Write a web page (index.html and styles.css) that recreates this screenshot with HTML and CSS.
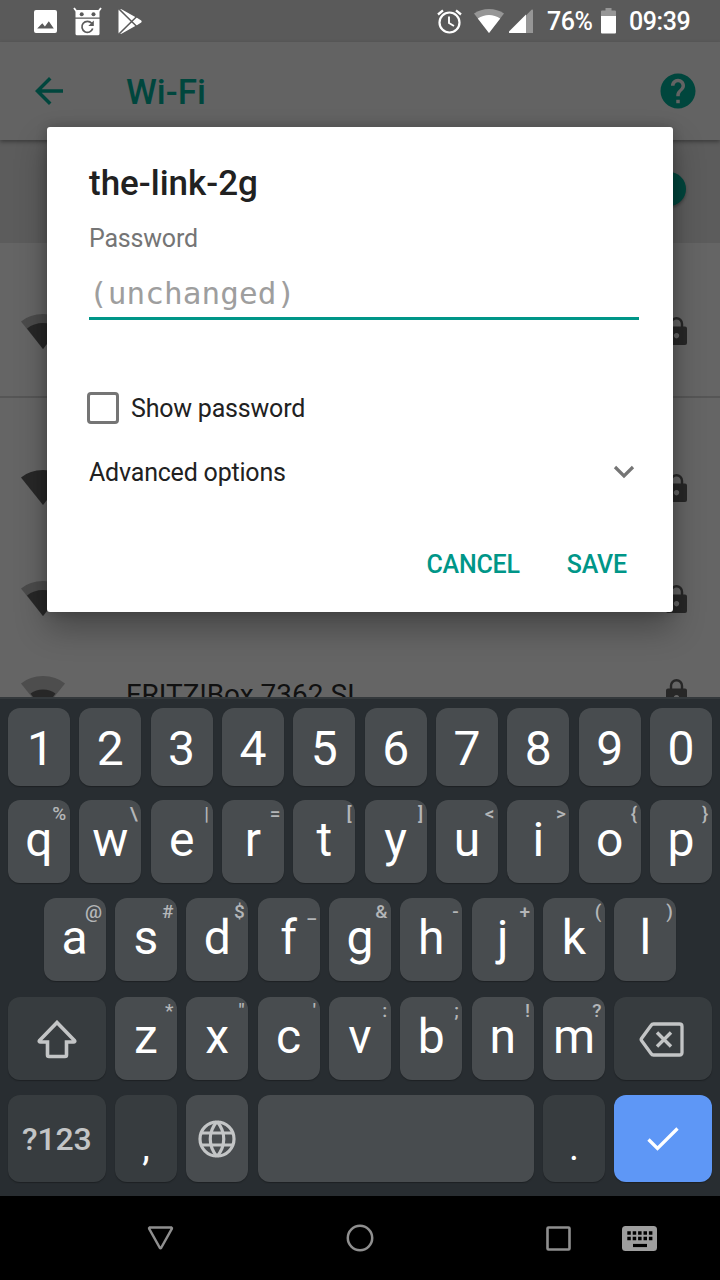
FILE: index.html
```html
<!DOCTYPE html>
<html lang="en">
<head>
<meta charset="utf-8">
<title>Wi-Fi</title>
<link rel="stylesheet" href="styles.css">
</head>
<body>
<div class="screen">
  <main class="app">
    <header class="status">
      <div class="status-left">
        <svg width="23" height="23" viewBox="0 0 23 23"><path fill="#fff" fill-rule="evenodd" d="M2 0h19A2 2 0 0 1 23 2v19a2 2 0 0 1-2 2H2A2 2 0 0 1 0 21V2A2 2 0 0 1 2 0zM3.200 18.500h16.600l-5-7.300-3.900 5.300-2.600-3.200z"/></svg>
        <svg class="bot" width="29" height="29" viewBox="0 0 29 29"><path d="M1 1l3 4M28 1l-3 4" stroke="#fff" stroke-width="1.800" fill="none"/><path fill="#fff" d="M4.500 3h20a2 2 0 0 1 2 2v5.500h-24V5a2 2 0 0 1 2-2zM2.500 11.700h24v15a1.500 1.500 0 0 1-1.500 1.500h-21a1.500 1.500 0 0 1-1.500-1.500z"/><circle cx="8.700" cy="7.200" r="2" fill="#5a5a5a"/><circle cx="20.500" cy="7.200" r="2" fill="#5a5a5a"/><path d="M18.700 16.300a5.500 5.500 0 1 0 1 5.200" stroke="#5a5a5a" stroke-width="1.700" fill="none"/><path d="M20.800 13.500v5.500h-5.500z" fill="#5a5a5a"/></svg>
        <svg class="play" width="24" height="25" viewBox="0 0 24 25"><path fill="#fff" d="M.5 1.500Q.5 .3 2 .3h1.500L17.300 8l1.300 .6 4.600 3q.9.900 0 1.800l-4.600 3-1.300.6L3.500 24.700H2Q.5 24.700 .5 23.500z"/><path d="M1.200 .2L19 17.800M1.200 24.800L19 7.200" stroke="#5a5a5a" stroke-width="1.500"/></svg>
      </div>
      <div class="status-right">
        <svg width="25" height="25" viewBox="0 0 25 25" fill="none" stroke="#fff"><circle cx="12.500" cy="13.500" r="10" stroke-width="2.200"/><path d="M1 5.500L6 1.300M24 5.500L19 1.300" stroke-width="2.300"/><path d="M12 7.500v6.500l5 3" stroke-width="1.900"/></svg>
        <svg class="s-wifi" width="30" height="24" viewBox="0 0 30 24"><path fill="#969696" d="M15 24L0 4.500Q6.500 0 15 0t15 4.500z"/><path fill="#fff" d="M15 24L3.800 9.500Q9 6 15 6t11.200 3.500z"/></svg>
        <svg class="s-cell" width="24" height="24" viewBox="0 0 24 24"><path fill="#969696" d="M0 24L22.500 .7Q24 0 24 1.500V24z"/><path fill="#fff" d="M0 22.500L17 5.500V24H1Q-.5 24 0 22.500z"/></svg>
        <span class="pct">76%</span>
        <svg class="s-batt" width="15" height="26" viewBox="0 0 15 26"><path fill="#969696" d="M0 8V3.500Q0 2.500 1 2.500h3.500V0h6v2.500H14q1 0 1 1V8z"/><path fill="#fff" d="M0 8h15v16.500q0 1-1 1H1q-1 0-1-1z"/></svg>
        <span class="time">09:39</span>
      </div>
    </header>

    <div class="appbar">
      <svg width="42" height="42" viewBox="0 0 24 24"><path fill="#00463d" d="M20 11H7.830l5.590-5.590L12 4l-8 8 8 8 1.410-1.410L7.830 13H20v-2z"/></svg>
      <h1 class="title">Wi-Fi</h1>
      <svg class="help" width="42" height="42" viewBox="0 0 24 24"><path fill="#00463d" d="M12 2C6.480 2 2 6.480 2 12s4.480 10 10 10 10-4.480 10-10S17.520 2 12 2zm1 17h-2v-2h2v2zm2.070-7.750l-.9.920C13.450 12.900 13 13.500 13 15h-2v-.5c0-1.100.45-2.100 1.170-2.830l1.240-1.260c.37-.36.590-.86.590-1.410 0-1.100-.9-2-2-2s-2 .9-2 2H8c0-2.210 1.790-4 4-4s4 1.790 4 4c0 .88-.36 1.680-.93 2.250z"/></svg>
    </div>

    <div class="switchbar"><span class="thumb"></span></div>

    <div class="net net-first">
      <svg width="44" height="35" viewBox="0 0 44 35"><path fill="#4b4b4b" d="M22 35L0 7.500Q9 0 22 0t22 7.500z"/><path fill="#272727" d="M22 35L6 14.500Q13 9 22 9t16 5.500z"/></svg>
      <svg class="lock" width="21" height="28" viewBox="0 0 21 28"><path d="M5 11V6.800a5.500 5.500 0 0 1 11 0V11" fill="none" stroke="#272727" stroke-width="2.400"/><path fill="#272727" fill-rule="evenodd" d="M2 9.500h17a2 2 0 0 1 2 2V26a2 2 0 0 1-2 2H2a2 2 0 0 1-2-2V11.500a2 2 0 0 1 2-2zM10.500 16a2.700 2.700 0 1 0 .01 0z"/></svg>
    </div>
    <div class="net net-second">
      <svg width="44" height="35" viewBox="0 0 44 35"><path fill="#272727" d="M22 35L0 7.500Q9 0 22 0t22 7.500z"/></svg>
      <svg class="lock" width="21" height="28" viewBox="0 0 21 28"><path d="M5 11V6.800a5.500 5.500 0 0 1 11 0V11" fill="none" stroke="#272727" stroke-width="2.400"/><path fill="#272727" fill-rule="evenodd" d="M2 9.500h17a2 2 0 0 1 2 2V26a2 2 0 0 1-2 2H2a2 2 0 0 1-2-2V11.500a2 2 0 0 1 2-2zM10.500 16a2.700 2.700 0 1 0 .01 0z"/></svg>
    </div>
    <div class="net net-third">
      <svg width="44" height="35" viewBox="0 0 44 35"><path fill="#4b4b4b" d="M22 35L0 7.500Q9 0 22 0t22 7.500z"/><path fill="#272727" d="M22 35L6 14.500Q13 9 22 9t16 5.500z"/></svg>
      <svg class="lock" width="21" height="28" viewBox="0 0 21 28"><path d="M5 11V6.800a5.500 5.500 0 0 1 11 0V11" fill="none" stroke="#272727" stroke-width="2.400"/><path fill="#272727" fill-rule="evenodd" d="M2 9.500h17a2 2 0 0 1 2 2V26a2 2 0 0 1-2 2H2a2 2 0 0 1-2-2V11.500a2 2 0 0 1 2-2zM10.500 16a2.700 2.700 0 1 0 .01 0z"/></svg>
    </div>
    <div class="net net-last">
      <svg width="44" height="35" viewBox="0 0 44 35"><path fill="#4d4d4d" d="M22 35L0 7.500Q9 0 22 0t22 7.500z"/><path fill="#272727" d="M22 35L9.500 17.500Q15 13.500 22 13.500t12.500 4z"/></svg>
      <span class="ssid">FRITZ!Box 7362 SL</span>
      <svg class="lock" width="21" height="28" viewBox="0 0 21 28"><path d="M5 11V6.800a5.500 5.500 0 0 1 11 0V11" fill="none" stroke="#272727" stroke-width="2.400"/><path fill="#272727" fill-rule="evenodd" d="M2 9.500h17a2 2 0 0 1 2 2V26a2 2 0 0 1-2 2H2a2 2 0 0 1-2-2V11.500a2 2 0 0 1 2-2zM10.500 16a2.700 2.700 0 1 0 .01 0z"/></svg>
    </div>

    <section class="dialog">
      <h2 class="dialog-title">the-link-2g</h2>
      <div class="label">Password</div>
      <div class="field">(unchanged)</div>
      <div class="check-row"><span class="box"></span><span class="check-text">Show password</span></div>
      <div class="advanced">
        <span class="adv-text">Advanced options</span>
        <svg width="22" height="14" viewBox="0 0 22 14"><path d="M2 2l9 9 9-9" fill="none" stroke="#757575" stroke-width="3.200"/></svg>
      </div>
      <div class="actions"><span class="cancel">CANCEL</span><span class="save">SAVE</span></div>
    </section>
  </main>

  <section class="keyboard">
    <div class="row digits">
      <div class="key one">1</div><div class="key">2</div><div class="key">3</div><div class="key">4</div><div class="key">5</div><div class="key">6</div><div class="key">7</div><div class="key">8</div><div class="key">9</div><div class="key">0</div>
    </div>
    <div class="row">
      <div class="key">q<span class="hint">%</span></div><div class="key">w<span class="hint">\</span></div><div class="key">e<span class="hint">|</span></div><div class="key">r<span class="hint">=</span></div><div class="key">t<span class="hint">[</span></div><div class="key">y<span class="hint">]</span></div><div class="key">u<span class="hint">&lt;</span></div><div class="key">i<span class="hint">&gt;</span></div><div class="key">o<span class="hint">{</span></div><div class="key">p<span class="hint">}</span></div>
    </div>
    <div class="row home">
      <div class="key">a<span class="hint">@</span></div><div class="key">s<span class="hint">#</span></div><div class="key">d<span class="hint">$</span></div><div class="key">f<span class="hint">_</span></div><div class="key">g<span class="hint">&amp;</span></div><div class="key">h<span class="hint">-</span></div><div class="key">j<span class="hint">+</span></div><div class="key">k<span class="hint">(</span></div><div class="key">l<span class="hint">)</span></div>
    </div>
    <div class="row">
      <div class="key wide dark icon"><svg width="40" height="39" viewBox="0 0 40 39"><path d="M20 2.500L2.500 20.500q-.8 1.500 1 1.500H10.500V35q0 1.500 1.500 1.500H28q1.500 0 1.500-1.500V22H36.500q1.800 0 1-1.500z" fill="none" stroke="#c3c5c6" stroke-width="3.600"/></svg></div>
      <div class="key">z<span class="hint">*</span></div><div class="key">x<span class="hint">"</span></div><div class="key">c<span class="hint">'</span></div><div class="key">v<span class="hint">:</span></div><div class="key">b<span class="hint">;</span></div><div class="key">n<span class="hint">!</span></div><div class="key">m<span class="hint">?</span></div>
      <div class="key wide dark icon"><svg class="del" width="45" height="35" viewBox="0 0 45 35" fill="none" stroke="#c3c5c6"><path d="M14.500 2H40.500q2.500 0 2.500 2.500V30.500q0 2.500-2.500 2.500H14.500q-1.500 0-2.500-1.500L2.500 18.500q-.7-1 0-2L12 3.500q1-1.500 2.500-1.500z" stroke-width="3.300"/><path d="M18 10.500L32 24.500M32 10.500L18 24.500" stroke-width="3.400"/></svg></div>
    </div>
    <div class="row bottom">
      <div class="key wide dark symbols">?123</div>
      <div class="key dark punct">,</div>
      <div class="key icon"><svg width="38" height="38" viewBox="0 0 38 38" fill="none" stroke="#c3c5c6" stroke-width="3.200"><circle cx="19" cy="19" r="17"/><path d="M3.500 13h31M3.500 25h31"/><path d="M19 1.500c-9 10.500-9 24.500 0 35M19 1.500c9 10.500 9 24.500 0 35"/></svg></div>
      <div class="key space"></div>
      <div class="key dark punct">.</div>
      <div class="key wide enter icon"><svg width="32" height="24" viewBox="0 0 32 24"><path d="M1.500 12.500L10.500 21.500 30.500 1.500" fill="none" stroke="#fff" stroke-width="3.300"/></svg></div>
    </div>
  </section>

  <nav class="nav">
    <svg width="27" height="24" viewBox="0 0 27 24"><path d="M2.500 1.500h22q.8.400.4 1.200L14.300 21.700q-.8 1-1.600 0L2.100 2.700q-.4-.8.4-1.200z" fill="none" stroke="#8f8f8f" stroke-width="2.400"/></svg>
    <svg class="n-home" width="28" height="28" viewBox="0 0 28 28"><circle cx="14" cy="14" r="12.200" fill="none" stroke="#8f8f8f" stroke-width="2.500"/></svg>
    <svg class="n-recent" width="25" height="25" viewBox="0 0 25 25"><rect x="1.500" y="1.500" width="22" height="22" rx="1" fill="none" stroke="#8f8f8f" stroke-width="2.600"/></svg>
    <svg class="n-kbd" width="35" height="25" viewBox="0 0 35 25"><rect width="35" height="25" rx="3.500" fill="#9e9e9e"/><path d="M5.300 7h25.500M5.300 12.500h25.500" stroke="#000" stroke-width="3.500" stroke-dasharray="3.500 1.900"/><path d="M11 19.500h14" stroke="#000" stroke-width="3.200"/></svg>
  </nav>
</div>
</body>
</html>
```
FILE: styles.css
```css
* { box-sizing: border-box; }
body { margin: 0; font-family: Roboto, "Liberation Sans", sans-serif; }
svg { display: block; flex: none; }
.screen { width: 720px; height: 1280px; display: flex; flex-direction: column; overflow: hidden; }

.app { position: relative; height: 697px; overflow: hidden; background: #656565; }

.status { height: 42px; background: #5a5a5a; display: flex; justify-content: space-between; padding: 0 26px 0 34px; color: #fff; font-size: 25px; font-weight: 500; letter-spacing: -.4px; }
.status-left, .status-right { display: flex; align-items: center; }
.bot { margin-left: 16px; }
.play { margin-left: 16px; }
.s-wifi { margin-left: 12px; }
.s-cell { margin-left: 5px; }
.pct { margin-left: 14px; width: 47px; line-height: 28px; padding-top: 2px; }
.s-batt { margin-left: 7px; }
.time { margin-left: 13px; width: 65px; line-height: 28px; padding-top: 2px; }

.appbar { height: 98px; background: #636363; display: flex; align-items: center; padding: 0 21px 0 28px; box-shadow: 0 2px 4px rgba(0,0,0,.35); position: relative; }
.title { margin: 4px 0 0 56px; font-size: 35px; line-height: 42px; font-weight: 500; color: #00463d; }
.help { margin-left: auto; }

.switchbar { height: 103px; background: #5c5c5c; display: flex; justify-content: flex-end; align-items: center; padding: 0 34px 5px 0; }
.thumb { width: 34px; height: 34px; border-radius: 50%; background: #00463d; box-shadow: 0 2px 3px rgba(0,0,0,.3); }

.net { display: flex; align-items: center; padding: 0 33px 0 21px; }
.net-first { height: 155px; padding-top: 23px; border-bottom: 2px solid #565656; }
.net-second { height: 145px; padding-top: 34px; }
.net-third { height: 104px; padding-top: 7px; }
.net-last { height: 93px; padding-bottom: 1px; }
.ssid { margin-left: 61px; padding-top: 2px; font-size: 28px; color: #111; white-space: nowrap; }
.lock { margin-left: auto; }

.dialog { position: absolute; left: 47px; top: 127px; width: 626px; height: 485px; padding: 36px 34px 0 42px; background: #fff; border-radius: 3px; box-shadow: 0 16px 32px rgba(0,0,0,.3), 0 0 12px rgba(0,0,0,.2); color: #212121; font-size: 25px; letter-spacing: -.2px; }
.dialog-title { margin: 0; font-size: 35px; line-height: 41px; font-weight: 500; letter-spacing: 0; }
.label { margin-top: 19px; line-height: 31px; color: #757575; }
.field { margin-top: 16px; height: 50px; font: 31px/47px "DejaVu Sans Mono", monospace; letter-spacing: .1px; color: #9e9e9e; border-bottom: 3px solid #009688; }
.check-row { display: flex; align-items: center; margin: 72px 0 0 -2px; height: 32px; }
.box { width: 32px; height: 32px; border: 3.500px solid #757575; border-radius: 4px; }
.check-text { margin-left: 12px; line-height: 30px; padding-top: 2px; }
.advanced { display: flex; justify-content: space-between; align-items: center; margin-top: 33px; height: 30px; padding-right: 4px; }
.actions { display: flex; justify-content: flex-end; margin-top: 63px; padding-right: 12px; line-height: 30px; font-weight: 500; color: #009688; }
.cancel { margin-right: 47px; }

.keyboard { height: 499px; background: #282d31; border-top: 2px solid #34393c; padding: 9px 8px 0; }
.row { display: flex; justify-content: space-between; height: 83px; margin-bottom: 15.400px; }
.digits { height: 78px; margin-bottom: 14px; }
.home { padding: 0 35.700px; }
.key { position: relative; width: 61.850px; padding-top: 16px; border-radius: 12px; background: #484c4f; color: #fff; text-align: center; font-size: 48px; line-height: 48px; box-shadow: 0 1px 1px #1d2124; }
.digits .key { padding-top: 17px; }
.digits .one { padding-left: 3px; }
.hint { position: absolute; top: 4px; right: 3.500px; font-size: 19px; line-height: 20px; font-weight: 500; color: #b4b6b8; }
.wide { width: 97.500px; }
.dark { background: #373c3f; }
.icon { display: flex; align-items: center; justify-content: center; padding-top: 3px; }
.del { margin-right: 3px; }
.bottom { height: 87px; margin-bottom: 0; }
.bottom .icon { padding-top: 0; }
.symbols { padding-top: 20px; font-size: 32px; font-weight: 500; letter-spacing: -.2px; color: #c3c5c6; }
.punct { padding-top: 28px; font-size: 38px; }
.space { width: 276px; }
.enter { background: #5e97f6; }

.nav { height: 84px; background: #000; display: flex; align-items: center; padding-left: 147px; }
.n-home { margin-left: 172px; }
.n-recent { margin-left: 172px; }
.n-kbd { margin-left: 51px; }
```
